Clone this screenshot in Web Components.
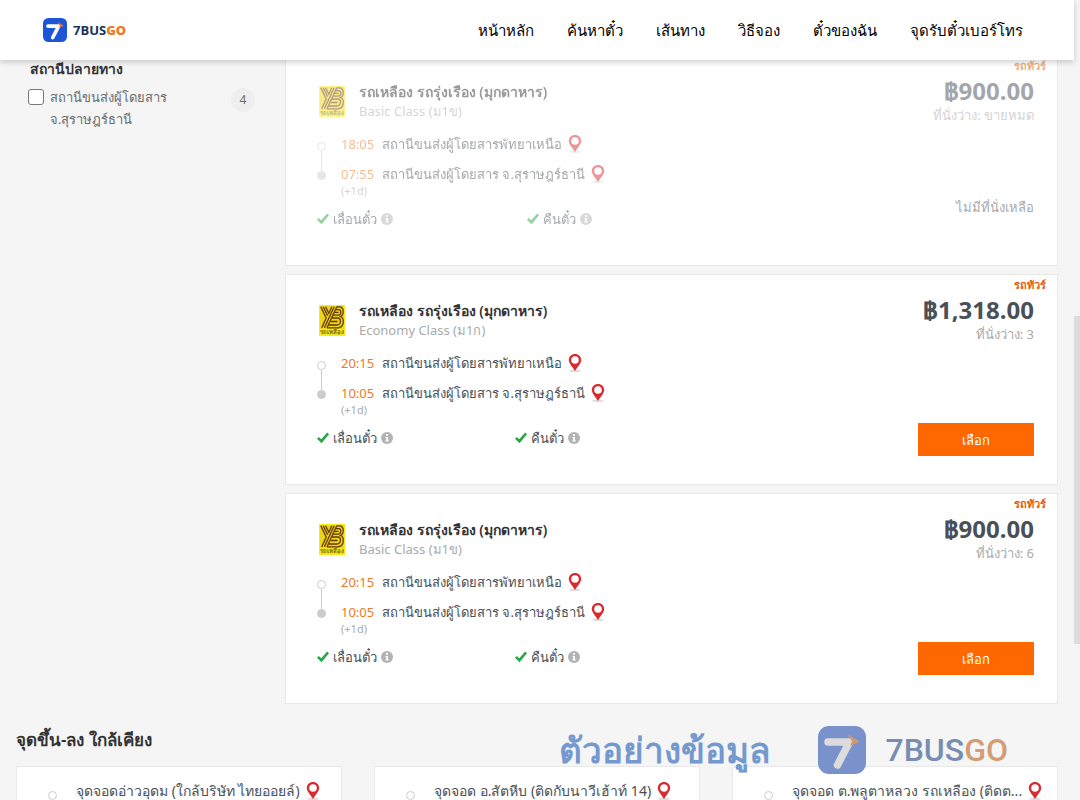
<!DOCTYPE html>
<html lang="th">
<head>
    <meta charset="UTF-8">
    <meta name="viewport" content="width=device-width, initial-scale=1">
    <title>7BUSGO</title>
    <style>
        body{
            margin:0;
            height:100vh;
            overflow:hidden;
            background-color:#f5f5f5;
            color:#495057;
            font-family:"Noto Sans","Open Sans",sans-serif;
            font-size:13px;
            line-height:20px;
        }
    </style>
</head>
<body>
<bus-app></bus-app>

<template id="bus-app-template">
    <style>
        :host{
            display:block;
            position:relative;
            height:100%;
            overflow:hidden;
            padding-right:6px;
            box-sizing:border-box;
        }
        site-header{
            position:absolute;
            top:0;
            left:0;
            right:6px;
            z-index:5;
        }
        main{
            padding:55px 16px 0 16px;
        }
        .search{
            display:grid;
            grid-template-columns:254px minmax(0,1fr);
            column-gap:15px;
        }
        .trips{
            display:grid;
            gap:8px;
        }
        h2{
            margin:26px 0 16px;
            font-size:17px;
            line-height:20px;
            font-weight:600;
            color:#333;
        }
        .stops{
            display:grid;
            grid-template-columns:repeat(3,minmax(0,1fr));
            gap:32px;
        }
        sample-mark{
            position:absolute;
            right:72px;
            top:725px;
            z-index:4;
        }
        .thumb{
            position:absolute;
            right:0;
            top:316px;
            width:6px;
            height:328px;
            background-color:#dcdcdc;
        }
    </style>
    <site-header>
        <a slot="nav" href="#home">หน้าหลัก</a>
        <a slot="nav" href="#search">ค้นหาตั๋ว</a>
        <a slot="nav" href="#routes">เส้นทาง</a>
        <a slot="nav" href="#howto">วิธีจอง</a>
        <a slot="nav" href="#tickets">ตั๋วของฉัน</a>
        <a slot="nav" href="#pickup">จุดรับตั๋วเบอร์โทร</a>
    </site-header>
    <main>
        <div class="search">
            <station-filter count="4">
                <span slot="title">สถานีปลายทาง</span>
                สถานีขนส่งผู้โดยสาร จ.สุราษฎร์ธานี
            </station-filter>
            <div class="trips">
                <trip-card sold-out depart="18:05" arrive="07:55" price="฿900.00" seats="ขายหมด">
                    <span slot="class">Basic Class (ม1ข)</span>
                </trip-card>
                <trip-card depart="20:15" arrive="10:05" price="฿1,318.00" seats="3">
                    <span slot="class">Economy Class (ม1ก)</span>
                </trip-card>
                <trip-card depart="20:15" arrive="10:05" price="฿900.00" seats="6">
                    <span slot="class">Basic Class (ม1ข)</span>
                </trip-card>
            </div>
        </div>
        <h2>จุดขึ้น-ลง ใกล้เคียง</h2>
        <div class="stops">
            <stop-card>จุดจอดอ่าวอุดม (ใกล้บริษัท ไทยออยล์)</stop-card>
            <stop-card>จุดจอด อ.สัตหีบ (ติดกับนาวีเฮ้าท์ 14)</stop-card>
            <stop-card>จุดจอด ต.พลูตาหลวง รถเหลือง (ติดต...</stop-card>
        </div>
    </main>
    <sample-mark>ตัวอย่างข้อมูล</sample-mark>
    <div class="thumb"></div>
</template>

<template id="brand-logo-template">
    <style>
        :host{
            display:block;
            width:24px;
            height:24px;
        }
        svg{
            display:block;
            width:100%;
            height:100%;
        }
    </style>
    <svg viewBox="0 0 48 48" aria-hidden="true">
        <rect width="48" height="48" rx="11" fill="var(--logo-back,#1d55d8)"/>
        <path d="M10 16H31.500L19.500 39" fill="none" stroke="var(--logo-seven,#fff)" stroke-width="7.500" stroke-linecap="round" stroke-linejoin="round"/>
        <path d="M29 8L42 15.500L32 20L34 15Z" fill="var(--logo-arrow,#f26b21)"/>
    </svg>
</template>

<template id="site-header-template">
    <style>
        :host{
            display:block;
            background-color:#fff;
            box-shadow:0 2px 6px rgba(0,0,0,.2);
        }
        header{
            display:flex;
            align-items:center;
            justify-content:space-between;
            height:60px;
            padding:0 51px 0 43px;
        }
        .brand{
            display:flex;
            align-items:center;
            gap:6px;
            font-family:"Open Sans","Noto Sans",sans-serif;
            font-size:13px;
            font-weight:700;
            color:#17335c;
            text-decoration:none;
        }
        .brand b{
            color:#f07a26;
        }
        nav{
            display:flex;
            gap:33px;
        }
        ::slotted(a){
            color:#000;
            font-size:15px;
            text-decoration:none;
            white-space:nowrap;
        }
    </style>
    <header>
        <a class="brand" href="#home"><brand-logo></brand-logo><span>7BUS<b>GO</b></span></a>
        <nav><slot name="nav"></slot></nav>
    </header>
</template>

<template id="station-filter-template">
    <style>
        :host{
            display:block;
            padding:4px 15px 0 12px;
        }
        h3{
            margin:0 0 7px 2px;
            font-size:14px;
            line-height:20px;
            font-weight:600;
            color:#333;
        }
        .row{
            display:flex;
            align-items:flex-start;
        }
        input{
            flex:none;
            width:16px;
            height:16px;
            margin:3px 6px 0 0;
            appearance:none;
            border:1px solid #767676;
            border-radius:3px;
            background-color:#fff;
        }
        label{
            width:140px;
            line-height:22px;
            color:#6c6c6c;
        }
        .count{
            margin-left:auto;
            margin-top:2px;
            width:24px;
            line-height:24px;
            border-radius:12px;
            background-color:#eee;
            text-align:center;
            font-size:12px;
            color:#6c6c6c;
        }
    </style>
    <h3><slot name="title"></slot></h3>
    <div class="row">
        <input type="checkbox" id="station">
        <label for="station"><slot></slot></label>
        <span class="count"></span>
    </div>
</template>

<template id="map-pin-template">
    <style>
        :host{
            display:inline-block;
            width:14px;
            height:18px;
        }
        svg{
            display:block;
        }
    </style>
    <a href="#map" aria-label="แผนที่">
        <svg width="14" height="18" viewBox="0 0 14 18">
            <ellipse cx="7" cy="16.800" rx="6" ry="1.200" fill="#ddd"/>
            <path fill="#da2a2f" fill-rule="evenodd" d="M7 0C3.500 0 .8 2.600 .8 6C.8 9.200 3.800 12 7 17C10.200 12 13.200 9.200 13.200 6C13.200 2.600 10.500 0 7 0ZM7 2.200A3.800 3.800 0 1 1 7 9.800A3.800 3.800 0 1 1 7 2.200Z"/>
        </svg>
    </a>
</template>

<template id="ticket-rule-template">
    <style>
        :host{
            display:flex;
            align-items:center;
            gap:4px;
            white-space:nowrap;
        }
    </style>
    <svg width="12" height="12" viewBox="0 0 12 12" aria-hidden="true">
        <path d="M0 6.800L1.800 5L4.200 7.300L10.200 .5L12 2.200L4.500 11.200Z" fill="#28a745"/>
    </svg>
    <slot></slot>
    <svg width="12" height="12" viewBox="0 0 12 12" aria-hidden="true">
        <circle cx="6" cy="6" r="6" fill="#b3b3b3"/>
        <path d="M5 2H7V3.800H5ZM4.500 5H7V8.500H7.800V9.600H4.300V8.500H5.200V6.100H4.500Z" fill="#fff"/>
    </svg>
</template>

<template id="operator-logo-template">
    <style>
        :host{
            display:block;
            width:26px;
            height:31px;
        }
        text{
            font-size:6px;
            font-weight:700;
        }
    </style>
    <svg width="26" height="31" viewBox="0 0 26 31" role="img" aria-label="YB">
        <rect width="26" height="31" fill="#f8ea18"/>
        <rect x="1" y="1" width="24" height="23" fill="#ecd512"/>
        <g fill="none" stroke="#65370f" stroke-width="1.300">
            <path d="M1.800 1.800L7.200 13L2.800 22.800M4.200 1.800L8.600 10.600M6.600 1.800L9.800 8.200L12.800 1.800"/>
            <path d="M15.200 1.800L5.400 22.800M17.800 1.800L8 22.800"/>
            <path d="M17.800 1.800H20.500C25 1.800 25.500 9.500 21.500 11.500C26 13.500 25 22.800 19 22.800H8"/>
            <path d="M16.800 4.600H20C22.500 4.600 22.300 10 19.500 10.200H14"/>
            <path d="M13 13H19C22.600 13 22.300 20 18 20H9.500M15.500 7.400H19.500M12 16.500H18.500"/>
        </g>
        <text x="13" y="29" text-anchor="middle" fill="#8a6410">รถเหลือง</text>
    </svg>
</template>

<template id="trip-card-template">
    <style>
        :host{
            display:block;
            --rule-column:198px;
        }
        :host([sold-out]){
            --rule-column:210px;
        }
        article{
            position:relative;
            display:flex;
            justify-content:space-between;
            min-height:211px;
            box-sizing:border-box;
            border:1px solid #e8e8e8;
            background-color:#fff;
            padding:26px 23px 0 31px;
        }
        :host([sold-out]) .trip,
        :host([sold-out]) .fare,
        :host([sold-out]) .tag{
            opacity:.5;
        }
        .tag{
            position:absolute;
            top:0;
            right:11px;
            font-size:11px;
            font-weight:600;
            color:#e2600c;
        }
        .operator{
            display:flex;
            gap:14px;
            align-items:flex-start;
            padding-left:2px;
        }
        operator-logo{
            margin-top:4px;
        }
        h3{
            margin:0;
            font-size:14px;
            line-height:20px;
            font-weight:600;
            color:#333;
        }
        .class{
            line-height:18px;
            color:#aaa;
        }
        .route{
            display:grid;
            grid-template-columns:9px minmax(0,1fr);
            column-gap:15px;
            margin-top:14px;
        }
        .line{
            display:flex;
            flex-direction:column;
            align-items:center;
            padding-top:8px;
        }
        .line i{
            width:7px;
            height:7px;
            border:1px solid #ccc;
            border-radius:50%;
        }
        .line i:last-child{
            background-color:#ccc;
        }
        .line span{
            width:1px;
            height:20px;
            background-color:#ccc;
        }
        ol{
            margin:0;
            padding:0;
            list-style:none;
        }
        li{
            display:flex;
            align-items:center;
            height:20px;
            margin-bottom:10px;
        }
        li:last-child{
            margin-bottom:0;
        }
        time{
            width:41px;
            color:#f07a26;
        }
        map-pin{
            margin-left:6px;
        }
        .day{
            display:block;
            margin-left:24px;
            font-size:11px;
            line-height:14px;
            color:#aaa;
        }
        .rules{
            display:grid;
            grid-template-columns:var(--rule-column) auto;
            justify-content:start;
            margin-top:11px;
        }
        .fare{
            display:flex;
            flex-direction:column;
            align-items:flex-end;
        }
        .price{
            margin-top:-6px;
            font-size:24px;
            line-height:29px;
            font-weight:700;
        }
        .seats{
            line-height:20px;
            color:#aaa;
        }
        button{
            width:116px;
            height:33px;
            margin-top:79px;
            padding:0;
            border:0;
            background-color:#ff6700;
            color:#fff;
            font:inherit;
            font-weight:500;
        }
        .none{
            margin-top:72px;
        }
    </style>
    <article>
        <span class="tag">รถทัวร์</span>
        <div class="trip">
            <div class="operator">
                <operator-logo></operator-logo>
                <div>
                    <h3>รถเหลือง รถรุ่งเรือง (มุกดาหาร)</h3>
                    <div class="class"><slot name="class"></slot></div>
                </div>
            </div>
            <div class="route">
                <div class="line"><i></i><span></span><i></i></div>
                <ol>
                    <li><time class="depart"></time>สถานีขนส่งผู้โดยสารพัทยาเหนือ<map-pin></map-pin></li>
                    <li><time class="arrive"></time>สถานีขนส่งผู้โดยสาร จ.สุราษฎร์ธานี<map-pin></map-pin></li>
                </ol>
            </div>
            <small class="day">(+1d)</small>
            <div class="rules">
                <ticket-rule>เลื่อนตั๋ว</ticket-rule>
                <ticket-rule>คืนตั๋ว</ticket-rule>
            </div>
        </div>
        <div class="fare">
            <span class="price"></span>
            <span class="seats"></span>
        </div>
    </article>
</template>

<template id="stop-card-template">
    <style>
        :host{
            display:block;
            box-sizing:border-box;
            min-height:150px;
            border:1px solid #e8e8e8;
            background-color:#fff;
            padding:14px 14px 0 31px;
        }
        div{
            display:flex;
            align-items:center;
        }
        i{
            flex:none;
            width:7px;
            height:7px;
            margin:8px 19px 0 0;
            border:1px solid #ccc;
            border-radius:50%;
        }
        span{
            white-space:nowrap;
            font-size:14px;
        }
        map-pin{
            flex:none;
            margin-left:6px;
        }
    </style>
    <div><i></i><span><slot></slot></span><map-pin></map-pin></div>
</template>

<template id="sample-mark-template">
    <style>
        :host{
            display:flex;
            align-items:center;
            font-size:35px;
            line-height:50px;
            font-weight:700;
            color:#7399cf;
            white-space:nowrap;
            pointer-events:none;
            --logo-back:#7a92cb;
            --logo-seven:#dcdcdc;
            --logo-arrow:#d29876;
        }
        brand-logo{
            width:48px;
            height:48px;
            margin:0 19px 0 48px;
        }
        .name{
            font-family:Roboto,sans-serif;
            font-size:32px;
            font-weight:500;
            color:#788db0;
        }
        .name b{
            font-weight:500;
            color:#d49c74;
        }
    </style>
    <slot></slot>
    <brand-logo></brand-logo>
    <span class="name">7BUS<b>GO</b></span>
</template>

<script type="text/javascript">
    class TemplateElement extends HTMLElement {
        constructor() {
            super();
            const template = document.getElementById(this.localName + "-template").content;
            this.attachShadow({mode: "open"}).appendChild(template.cloneNode(true));
        }
    }

    customElements.define("brand-logo", class extends TemplateElement {});
    customElements.define("operator-logo", class extends TemplateElement {});
    customElements.define("map-pin", class extends TemplateElement {});
    customElements.define("ticket-rule", class extends TemplateElement {});
    customElements.define("site-header", class extends TemplateElement {});
    customElements.define("stop-card", class extends TemplateElement {});
    customElements.define("sample-mark", class extends TemplateElement {});

    customElements.define("station-filter", class extends TemplateElement {
        connectedCallback() {
            this.shadowRoot.querySelector(".count").textContent = this.getAttribute("count");
        }
    });

    customElements.define("trip-card", class extends TemplateElement {
        connectedCallback() {
            const root = this.shadowRoot;
            root.querySelector(".depart").textContent = this.getAttribute("depart");
            root.querySelector(".arrive").textContent = this.getAttribute("arrive");
            root.querySelector(".price").textContent = this.getAttribute("price");
            root.querySelector(".seats").textContent = "ที่นั่งว่าง: " + this.getAttribute("seats");
            // sold out trips get a message in place of the button
            const soldOut = this.hasAttribute("sold-out");
            const action = document.createElement(soldOut ? "span" : "button");
            action.textContent = soldOut ? "ไม่มีที่นั่งเหลือ" : "เลือก";
            if(soldOut){
                action.className = "none";
            }
            root.querySelector(".fare").appendChild(action);
        }
    });

    customElements.define("bus-app", class extends TemplateElement {});
</script>
</body>
</html>
